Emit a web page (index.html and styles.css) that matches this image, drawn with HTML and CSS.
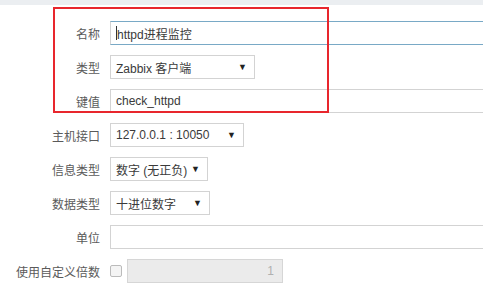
FILE: index.html
```html
<!DOCTYPE html>
<html lang="zh-CN">
<head>
    <meta charset="UTF-8">
    <title>监控项</title>
    <link rel="stylesheet" href="styles.css">
</head>
<body>
    <div class="top-band"></div>

    <div class="form">
        <div class="row">
            <label>名称</label>
            <div class="field text focus"><span class="caret"></span>httpd进程监控</div>
        </div>
        <div class="row">
            <label>类型</label>
            <div class="field select w-type">Zabbix 客户端<span class="arrow">▼</span></div>
        </div>
        <div class="row">
            <label>键值</label>
            <div class="field text">check_httpd</div>
        </div>
        <div class="row">
            <label>主机接口</label>
            <div class="field select w-host">127.0.0.1 : 10050<span class="arrow">▼</span></div>
        </div>
        <div class="row">
            <label>信息类型</label>
            <div class="field select w-info">数字 (无正负)<span class="arrow">▼</span></div>
        </div>
        <div class="row">
            <label>数据类型</label>
            <div class="field select w-data">十进位数字<span class="arrow">▼</span></div>
        </div>
        <div class="row">
            <label>单位</label>
            <div class="field text"></div>
        </div>
        <div class="row">
            <label>使用自定义倍数</label>
            <div class="multi">
                <span class="checkbox"></span>
                <div class="field disabled">1</div>
            </div>
        </div>
    </div>

    <!-- 标注框 -->
    <div class="highlight"></div>
</body>
</html>
```

FILE: styles.css
```css
body {
    margin: 0;
    background: #fff;
    font-family: "Liberation Sans", "Noto Sans CJK SC", sans-serif;
    font-size: 12px;
    color: #3a3a3a;
    overflow: hidden;
    width: 483px;
    height: 285px;
    position: relative;
}
.top-band {
    height: 5px;
    background: #ebeef1;
}
.form {
    padding-top: 16px;
    display: flex;
    flex-direction: column;
    gap: 10px;
}
.row {
    display: grid;
    grid-template-columns: 100px 1fr;
    column-gap: 10px;
    align-items: center;
    height: 24px;
}
.row label {
    text-align: right;
    color: #5a5a5a;
    white-space: nowrap;
}
.field {
    box-sizing: border-box;
    height: 24px;
    border: 1px solid #d3d3d3;
    background: #fff;
    padding: 0 5px;
    display: flex;
    align-items: center;
    white-space: nowrap;
}
/* 文本框一直延伸到窗口右边 */
.field.text {
    width: 373px;
    border-right: 0;
}
.field.focus {
    border-color: #79a9c6;
    border-left-color: #d3d3d3;
}
.caret {
    display: inline-block;
    width: 1px;
    height: 14px;
    background: #333;
}
.field.select {
    justify-content: space-between;
    padding-right: 7px;
}
.arrow {
    font-size: 9px;
    color: #222;
}
.w-type { width: 145px; }
.w-host { width: 134px; }
.w-info { width: 98px; }
.w-data { width: 100px; }
.multi {
    display: flex;
    align-items: center;
    gap: 5px;
}
.checkbox {
    box-sizing: border-box;
    width: 12px;
    height: 12px;
    border: 1px solid #bbb;
    border-radius: 2px;
    background: #f4f4f4;
}
.field.disabled {
    width: 156px;
    background: #ebebeb;
    border-color: #d6d6d6;
    color: #b0b0b0;
    justify-content: flex-end;
    padding-right: 8px;
}
.highlight {
    position: absolute;
    left: 53px;
    top: 7px;
    width: 276px;
    height: 106px;
    box-sizing: border-box;
    border: 2px solid #e8262d;
    pointer-events: none;
}
```
